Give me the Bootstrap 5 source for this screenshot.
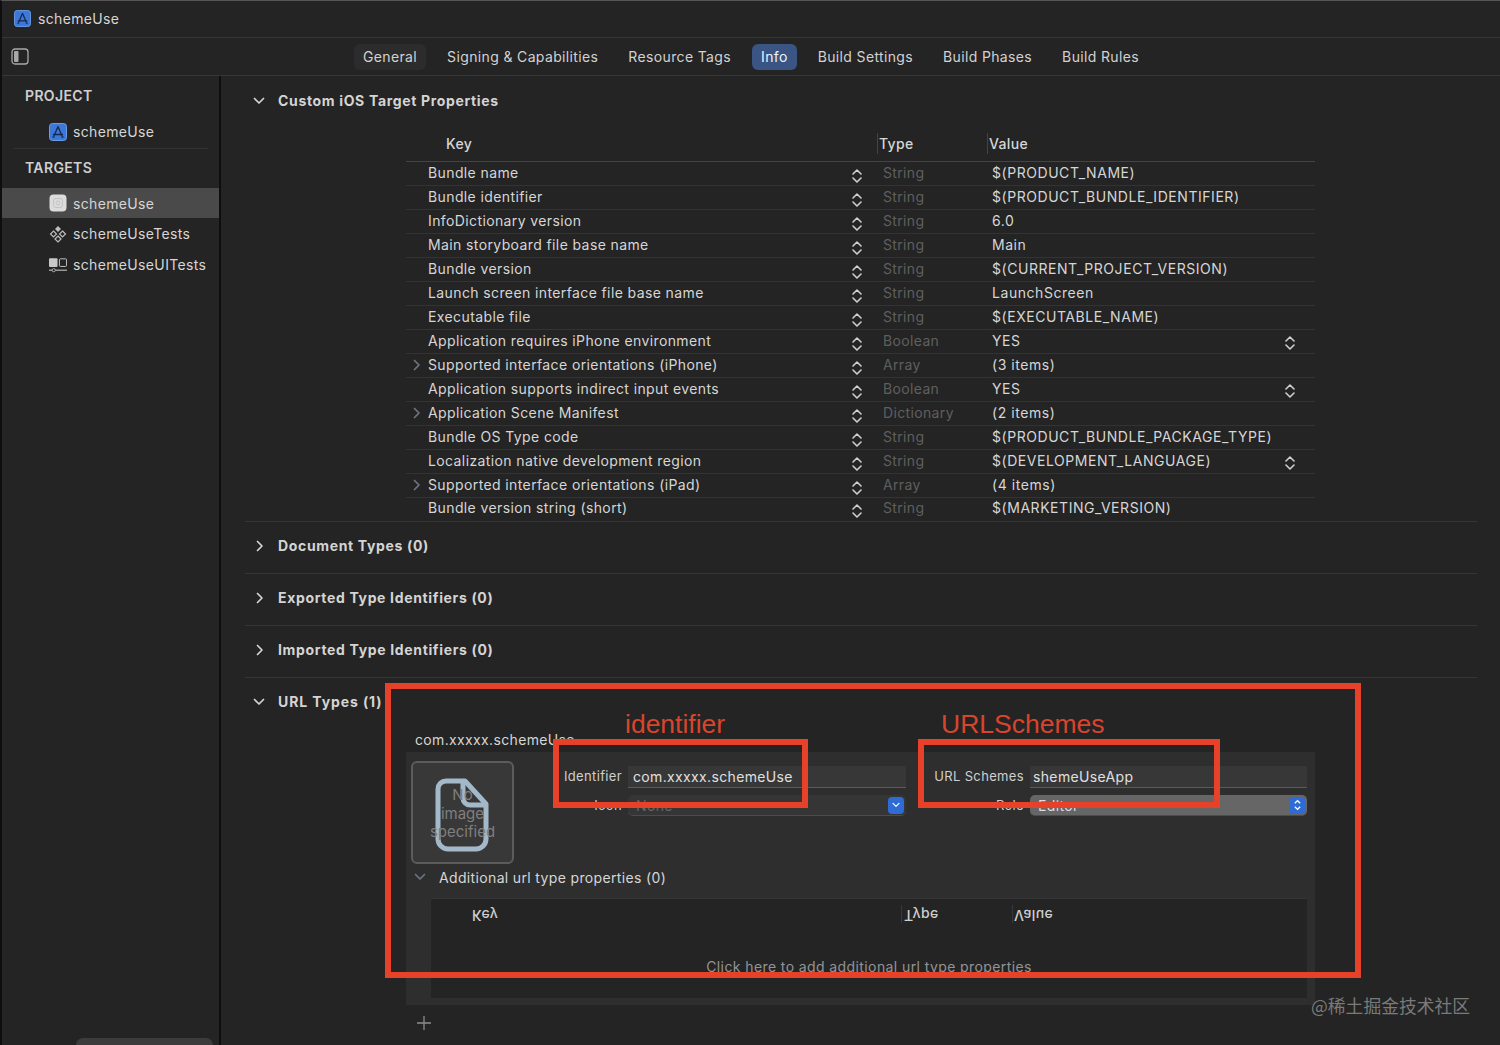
<!DOCTYPE html>
<html lang="en">
<head>
  <meta charset="UTF-8" />
  <meta name="viewport" content="width=device-width, initial-scale=1.0"/>
  <title>schemeUse</title>
  <link href="https://cdn.jsdelivr.net/npm/bootstrap@5.3.0/dist/css/bootstrap.min.css" rel="stylesheet" />
  <style>
    html, body { height: 100%; }
    body {
      background-color: #242424;
      color: #d6d6d6;
      font-family: Inter, "Liberation Sans", sans-serif;
      font-size: 14px;
      letter-spacing: .35px;
      overflow: hidden;
      position: relative;
      border-left: 2px solid #0e0e0e;
      border-top: 1px solid #555;
    }
    .title-bar { height: 37px; padding: 0 0 2px 12px; gap: 7px; border-bottom: 1px solid #363636; }
    .tab-bar { height: 38px; border-bottom: 1px solid #363636; padding-left: 9px; }
    .tab-list { margin-left: 325px; gap: 12px; letter-spacing: .36px; }
    .tab-item { padding: 0 9px; height: 26px; line-height: 26px; border-radius: 6px; color: #d2d2d2; }
    .tab-item.soft { background: #2c2c2c; }
    .tab-item.active-tab { background: #3a5583; color: #eef2f8; }
    .main-area { height: 969px; }
    .side-nav { width: 219px; flex: none; border-right: 2px solid #0e0e0e; padding-top: 1px; }
    .nav-head { font-weight: 600; padding-left: 23px; color: #cfcfcf; margin: 8px 0 10px; }
    .nav-item { height: 31px; padding-left: 47px; gap: 6px; flex: none; }
    .nav-item.picked { background: #4a4a4a; height: 30px; }
    .nav-rule { height: 1px; background: #333; margin: 1px 11px 0 12px; }
    .filter-stub { height: 7px; margin: auto 6px 0 74px; background: #3c3c3c; border-radius: 8px 8px 0 0; }
    .detail { flex: 1; padding: 0 23px 0 24px; min-width: 0; }
    .sec-head { height: 51px; gap: 13px; font-weight: 700; letter-spacing: .66px; padding: 0 0 4px 8px; color: #d4d4d4; }
    .sec-head.short-head { height: 50px; padding-bottom: 1px; }
    .sec-head.url-head { height: 49px; padding-bottom: 2px; letter-spacing: .9px; }
    .sec-head.closed { padding-left: 11px; gap: 14px; }
    .sec-line { border-bottom: 1px solid #363636; }
    .prop-table { margin-left: 161px; width: 909px; }
    .prop-head { height: 36px; border-bottom: 1px solid #444; font-weight: 500; }
    .prop-row { height: 24px; border-bottom: 1px solid #333; padding-bottom: 3px; }
    .prop-row:last-child { border-bottom: 0; height: 23px; padding-bottom: 4px; }
    .col-key { width: 446px; flex: none; padding-left: 22px; position: relative; letter-spacing: .39px; }
    .col-key svg { position: absolute; left: 7px; top: 5px; }
    .col-step { width: 31px; flex: none; display: flex; padding-top: 7px; }
    .col-type { width: 109px; flex: none; color: #5f5f5f; }
    .col-val { flex: 1; min-width: 0; padding-right: 20px; letter-spacing: .55px; }
    .col-val svg { margin-top: 6px; }
    .head-key { width: 471px; flex: none; padding-left: 40px; }
    .head-type { width: 110px; flex: none; padding-left: 1px; border-left: 1px solid #444; }
    .head-val { padding-left: 1px; border-left: 1px solid #444; }
    .url-name { margin-left: 170px; height: 25px; padding-top: 2px; }
    .url-panel { margin-left: 161px; width: 909px; height: 253px; background: #2e2e2e; padding: 9px 9px 7px 5px; }
    .well {
      width: 103px; height: 103px; flex: none; position: relative; border: 2px solid #5c5c5c;
      border-radius: 6px; background: #383838;
    }
    .well svg { position: absolute; left: 22px; top: 15px; }
    .well-text { position: absolute; inset: 23px 0 0 0; text-align: center; color: #7f7f7f; font-size: 15px; letter-spacing: 0; line-height: 18.5px; }
    .form-side { flex: 1; padding-top: 5px; }
    .fld-label { font-size: 13px; text-align: right; color: #d0d0d0; white-space: nowrap; }
    .fld-left .fld-label { width: 108px; }
    .fld-right .fld-label { width: 117px; }
    .fld-left { width: 392px; }
    .fld-right { width: 400px; margin-left: 1px; }
    .fld-row { gap: 6px; height: 22px; margin-bottom: 7px; }
    .fld-input { flex: 1; height: 22px; line-height: 22px; padding-left: 5px; background: #373737; border-bottom: 1px solid #5a5a5a; color: #e0e0e0; }
    .fld-right .fld-input { padding-left: 3px; }
    .fld-select { flex: 1; height: 21px; line-height: 21px; padding: 0 2px 0 8px; background: #353535; border-radius: 5px; border-bottom: 1px solid #4c4c4c; color: #666; margin-top: -1px; }
    .fld-select.on { background: #666; color: #ddd; }
    .blue-cap { width: 16px; height: 17px; border-radius: 4px; background: #2f6bd4; }
    .extra-head { height: 26px; gap: 13px; margin: 0 0 8px 3px; }
    .extra-table { margin-left: 20px; height: 100px; background: #242424; position: relative; width: 876px; border-top: 1px solid #343434; }
    .flip { display: inline-block; transform: scaleY(-1); color: #cfcfcf; font-weight: 500; position: absolute; top: 6px; }
    .flip-sep { position: absolute; top: 6px; height: 18px; border-left: 1px solid #383838; }
    .add-hint { position: absolute; left: 0; right: 0; top: 57px; text-align: center; color: #949494; letter-spacing: .4px; }
    .plus-btn { margin: 11px 0 0 172px; }
    .red-box { position: absolute; border: 6px solid #e8412a; pointer-events: none; }
    .red-label { position: absolute; color: #d9442c; font-family: "Liberation Sans", sans-serif; font-size: 26.5px; letter-spacing: 0; line-height: 32px; }
    .water { position: absolute; left: 1309px; top: 992px; color: #7a7a7a; font-size: 17.800px; letter-spacing: 0; font-family: "Noto Sans CJK SC", sans-serif; line-height: 24px; }
  </style>
</head>
<body>
  <svg width="0" height="0" class="position-absolute">
    <symbol id="ic-app" viewBox="0 0 18 18">
      <rect x=".5" y=".5" width="17" height="17" rx="3" fill="#3d78d8" stroke="#6b9ce6"/>
      <path d="M9 3.500 5 13M9 3.500 13 13M4 11.500h10M3.500 14h2M12.500 14h2" stroke="#14294e" stroke-width="1.300" fill="none"/>
    </symbol>
    <symbol id="ic-target" viewBox="0 0 18 18">
      <rect x=".5" y=".5" width="17" height="17" rx="4" fill="#dcdcdc"/>
      <rect x="4.500" y="4.500" width="9" height="9" rx="2.500" fill="none" stroke="#c4c4c4"/>
      <circle cx="9" cy="9" r="2" fill="none" stroke="#c4c4c4"/>
    </symbol>
    <symbol id="ic-test" viewBox="0 0 18 18">
      <path d="M9 1 12 4 9 7 6 4Z" fill="#bdbdbd"/>
      <path d="M4.500 6 7.500 9 4.500 12 1.500 9ZM13.500 6 16.500 9 13.500 12 10.500 9ZM9 11 12 14 9 17 6 14Z" fill="none" stroke="#bdbdbd" stroke-width="1.200"/>
    </symbol>
    <symbol id="ic-ui" viewBox="0 0 19 16">
      <rect x="0" y="1" width="9" height="9" rx="1" fill="#c8c8c8"/>
      <rect x="11" y="1.500" width="7.500" height="8" rx="1" fill="none" stroke="#c8c8c8"/>
      <path d="M0 13.500h19" stroke="#b0b0b0" stroke-width="1.300"/>
      <circle cx="5" cy="13.500" r="1.700" fill="#242424" stroke="#b0b0b0"/>
    </symbol>
    <symbol id="ic-updown" viewBox="0 0 10 16">
      <path d="M1 6 5 2l4 4M1 10l4 4 4-4" fill="none" stroke="#d0d0d0" stroke-width="1.600" stroke-linecap="round" stroke-linejoin="round"/>
    </symbol>
    <symbol id="ic-down" viewBox="0 0 12 8">
      <path d="M1.500 1.500 6 6l4.500-4.500" fill="none" stroke="currentColor" stroke-width="1.700" stroke-linecap="round" stroke-linejoin="round"/>
    </symbol>
    <symbol id="ic-right" viewBox="0 0 8 12">
      <path d="M1.500 1.500 6 6l-4.500 4.500" fill="none" stroke="currentColor" stroke-width="1.700" stroke-linecap="round" stroke-linejoin="round"/>
    </symbol>
  </svg>

  <div class="title-bar d-flex align-items-center">
    <svg width="17" height="17"><use href="#ic-app"/></svg>
    <span>schemeUse</span>
  </div>

  <div class="tab-bar d-flex align-items-center">
    <svg width="18" height="17" viewBox="0 0 18 17">
      <rect x="1" y="1" width="16" height="15" rx="3" fill="none" stroke="#a8a8a8" stroke-width="1.300"/>
      <rect x="3" y="3" width="4.500" height="11" rx="1" fill="#a8a8a8"/>
    </svg>
    <div class="tab-list d-flex">
      <div class="tab-item soft">General</div>
      <div class="tab-item">Signing &amp; Capabilities</div>
      <div class="tab-item">Resource Tags</div>
      <div class="tab-item active-tab">Info</div>
      <div class="tab-item">Build Settings</div>
      <div class="tab-item">Build Phases</div>
      <div class="tab-item">Build Rules</div>
    </div>
  </div>

  <div class="main-area d-flex">
    <div class="side-nav d-flex flex-column">
      <div class="nav-head">PROJECT</div>
      <div class="nav-item d-flex align-items-center"><svg width="18" height="18"><use href="#ic-app"/></svg>schemeUse</div>
      <div class="nav-rule"></div>
      <div class="nav-head">TARGETS</div>
      <div class="nav-item picked d-flex align-items-center"><svg width="18" height="18"><use href="#ic-target"/></svg>schemeUse</div>
      <div class="nav-item d-flex align-items-center"><svg width="18" height="18"><use href="#ic-test"/></svg>schemeUseTests</div>
      <div class="nav-item d-flex align-items-center"><svg width="18" height="16"><use href="#ic-ui"/></svg>schemeUseUITests</div>
      <div class="filter-stub"></div>
    </div>

    <div class="detail">
      <div class="sec-line">
        <div class="sec-head short-head d-flex align-items-center"><svg width="12" height="8"><use href="#ic-down"/></svg>Custom iOS Target Properties</div>
        <div class="prop-table">
          <div class="prop-head d-flex align-items-center">
            <div class="head-key">Key</div><div class="head-type">Type</div><div class="head-val">Value</div>
          </div>
          <div class="prop-row d-flex align-items-center"><div class="col-key">Bundle name</div><div class="col-step"><svg width="10" height="16"><use href="#ic-updown"/></svg></div><div class="col-type">String</div><div class="col-val">$(PRODUCT_NAME)</div></div>
          <div class="prop-row d-flex align-items-center"><div class="col-key">Bundle identifier</div><div class="col-step"><svg width="10" height="16"><use href="#ic-updown"/></svg></div><div class="col-type">String</div><div class="col-val">$(PRODUCT_BUNDLE_IDENTIFIER)</div></div>
          <div class="prop-row d-flex align-items-center"><div class="col-key">InfoDictionary version</div><div class="col-step"><svg width="10" height="16"><use href="#ic-updown"/></svg></div><div class="col-type">String</div><div class="col-val">6.0</div></div>
          <div class="prop-row d-flex align-items-center"><div class="col-key">Main storyboard file base name</div><div class="col-step"><svg width="10" height="16"><use href="#ic-updown"/></svg></div><div class="col-type">String</div><div class="col-val">Main</div></div>
          <div class="prop-row d-flex align-items-center"><div class="col-key">Bundle version</div><div class="col-step"><svg width="10" height="16"><use href="#ic-updown"/></svg></div><div class="col-type">String</div><div class="col-val">$(CURRENT_PROJECT_VERSION)</div></div>
          <div class="prop-row d-flex align-items-center"><div class="col-key">Launch screen interface file base name</div><div class="col-step"><svg width="10" height="16"><use href="#ic-updown"/></svg></div><div class="col-type">String</div><div class="col-val">LaunchScreen</div></div>
          <div class="prop-row d-flex align-items-center"><div class="col-key">Executable file</div><div class="col-step"><svg width="10" height="16"><use href="#ic-updown"/></svg></div><div class="col-type">String</div><div class="col-val">$(EXECUTABLE_NAME)</div></div>
          <div class="prop-row d-flex align-items-center"><div class="col-key">Application requires iPhone environment</div><div class="col-step"><svg width="10" height="16"><use href="#ic-updown"/></svg></div><div class="col-type">Boolean</div><div class="col-val d-flex justify-content-between align-items-center">YES<svg width="10" height="16"><use href="#ic-updown"/></svg></div></div>
          <div class="prop-row d-flex align-items-center"><div class="col-key"><svg width="8" height="12" class="text-secondary"><use href="#ic-right"/></svg>Supported interface orientations (iPhone)</div><div class="col-step"><svg width="10" height="16"><use href="#ic-updown"/></svg></div><div class="col-type">Array</div><div class="col-val">(3 items)</div></div>
          <div class="prop-row d-flex align-items-center"><div class="col-key">Application supports indirect input events</div><div class="col-step"><svg width="10" height="16"><use href="#ic-updown"/></svg></div><div class="col-type">Boolean</div><div class="col-val d-flex justify-content-between align-items-center">YES<svg width="10" height="16"><use href="#ic-updown"/></svg></div></div>
          <div class="prop-row d-flex align-items-center"><div class="col-key"><svg width="8" height="12" class="text-secondary"><use href="#ic-right"/></svg>Application Scene Manifest</div><div class="col-step"><svg width="10" height="16"><use href="#ic-updown"/></svg></div><div class="col-type">Dictionary</div><div class="col-val">(2 items)</div></div>
          <div class="prop-row d-flex align-items-center"><div class="col-key">Bundle OS Type code</div><div class="col-step"><svg width="10" height="16"><use href="#ic-updown"/></svg></div><div class="col-type">String</div><div class="col-val">$(PRODUCT_BUNDLE_PACKAGE_TYPE)</div></div>
          <div class="prop-row d-flex align-items-center"><div class="col-key">Localization native development region</div><div class="col-step"><svg width="10" height="16"><use href="#ic-updown"/></svg></div><div class="col-type">String</div><div class="col-val d-flex justify-content-between align-items-center">$(DEVELOPMENT_LANGUAGE)<svg width="10" height="16"><use href="#ic-updown"/></svg></div></div>
          <div class="prop-row d-flex align-items-center"><div class="col-key"><svg width="8" height="12" class="text-secondary"><use href="#ic-right"/></svg>Supported interface orientations (iPad)</div><div class="col-step"><svg width="10" height="16"><use href="#ic-updown"/></svg></div><div class="col-type">Array</div><div class="col-val">(4 items)</div></div>
          <div class="prop-row d-flex align-items-center"><div class="col-key">Bundle version string (short)</div><div class="col-step"><svg width="10" height="16"><use href="#ic-updown"/></svg></div><div class="col-type">String</div><div class="col-val">$(MARKETING_VERSION)</div></div>
        </div>
      </div>

      <div class="sec-line"><div class="sec-head closed d-flex align-items-center"><svg width="8" height="12"><use href="#ic-right"/></svg>Document Types (0)</div></div>
      <div class="sec-line"><div class="sec-head closed d-flex align-items-center"><svg width="8" height="12"><use href="#ic-right"/></svg>Exported Type Identifiers (0)</div></div>
      <div class="sec-line"><div class="sec-head closed d-flex align-items-center"><svg width="8" height="12"><use href="#ic-right"/></svg>Imported Type Identifiers (0)</div></div>

      <div class="sec-head url-head d-flex align-items-center"><svg width="12" height="8"><use href="#ic-down"/></svg>URL Types (1)</div>
      <div class="url-name">com.xxxxx.schemeUse</div>
      <div class="url-panel">
        <div class="d-flex">
          <div class="well">
            <svg width="54" height="74" viewBox="0 0 54 74">
              <path d="M11 3h19l21 23v35a10 10 0 0 1-10 10H13A10 10 0 0 1 3 61V11a8 8 0 0 1 8-8Z" fill="none" stroke="#a3b9ca" stroke-width="5" stroke-linejoin="round"/>
              <path d="M28 4v16a7 7 0 0 0 7 7h15" fill="none" stroke="#a3b9ca" stroke-width="5"/>
            </svg>
            <div class="well-text">No<br>image<br>specified</div>
          </div>
          <div class="form-side d-flex">
            <div class="fld-left">
              <div class="fld-row d-flex align-items-center"><div class="fld-label">Identifier</div><div class="fld-input">com.xxxxx.schemeUse</div></div>
              <div class="fld-row d-flex align-items-center"><div class="fld-label">Icon</div><div class="fld-select d-flex align-items-center justify-content-between">None<span class="blue-cap d-flex align-items-center justify-content-center text-white"><svg width="8" height="6"><use href="#ic-down"/></svg></span></div></div>
            </div>
            <div class="fld-right">
              <div class="fld-row d-flex align-items-center"><div class="fld-label">URL Schemes</div><div class="fld-input">shemeUseApp</div></div>
              <div class="fld-row d-flex align-items-center"><div class="fld-label">Role</div><div class="fld-select on d-flex align-items-center justify-content-between">Editor<span class="blue-cap d-flex align-items-center justify-content-center"><svg width="9" height="14" viewBox="0 0 10 16"><path d="M2 6l3-3 3 3M2 10l3 3 3-3" fill="none" stroke="#fff" stroke-width="1.600"/></svg></span></div></div>
            </div>
          </div>
        </div>
        <div class="extra-head d-flex align-items-center"><svg width="12" height="8" class="text-secondary"><use href="#ic-down"/></svg>Additional url type properties (0)</div>
        <div class="extra-table">
          <span class="flip" style="left:41px">Key</span>
          <span class="flip-sep" style="left:470px"></span>
          <span class="flip" style="left:473px">Type</span>
          <span class="flip-sep" style="left:581px"></span>
          <span class="flip" style="left:583px">Value</span>
          <div class="add-hint">Click here to add additional url type properties</div>
        </div>
      </div>
      <div class="plus-btn d-flex">
        <svg width="14" height="14" viewBox="0 0 14 14"><path d="M7 0v14M0 7h14" stroke="#8c8c8c" stroke-width="1.300"/></svg>
      </div>
    </div>
  </div>

  <div class="red-box" style="left:383px;top:682px;width:976px;height:295px"></div>
  <div class="red-box" style="left:551px;top:738px;width:255px;height:69px"></div>
  <div class="red-box" style="left:916px;top:738px;width:302px;height:69px"></div>
  <div class="red-label" style="left:623px;top:707px">identifier</div>
  <div class="red-label" style="left:939px;top:707px">URLSchemes</div>
  <div class="water">@稀土掘金技术社区</div>

  <script src="https://cdn.jsdelivr.net/npm/bootstrap@5.3.0/dist/js/bootstrap.bundle.min.js"></script>
</body>
</html>
